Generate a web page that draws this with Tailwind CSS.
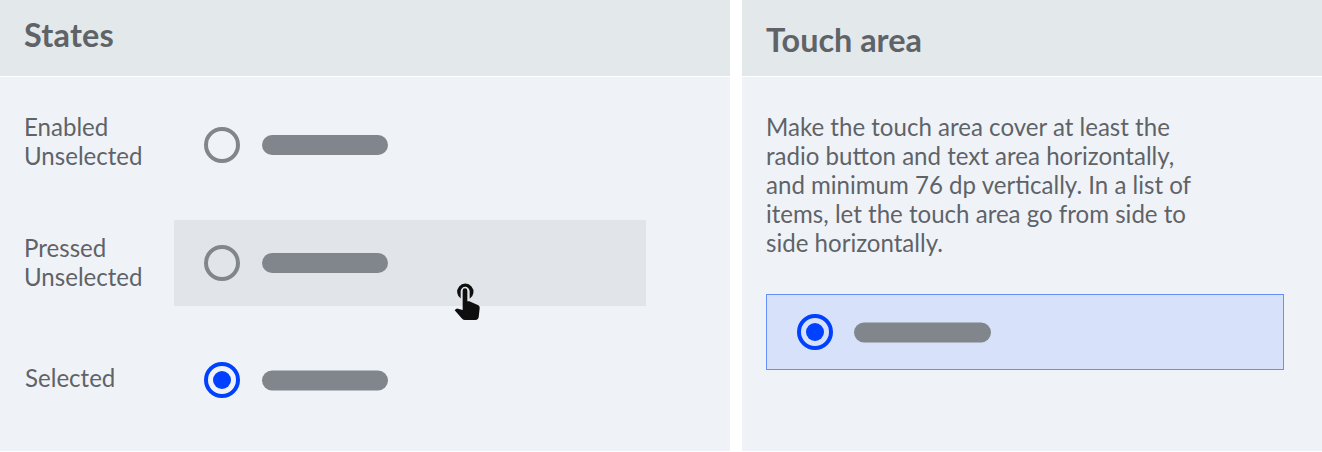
<!DOCTYPE html>
<html lang="en"><head><meta charset="utf-8"><title>Radio button states</title>
<script src="https://cdn.jsdelivr.net/npm/@tailwindcss/browser@4"></script></head>
<body class="h-[452px] w-[1322px] overflow-hidden bg-white font-['Lato',sans-serif] text-[24px] leading-[29px] text-[#5f6368]">
<main class="flex h-[451px] gap-3">
<section class="flex w-[730px] flex-col bg-[#eff3f8]">
<h1 class="h-[77px] border-b border-white bg-[#e3e8eb] pl-6 pt-[15px] text-[32.4px] font-bold leading-[40px] tracking-[0.2px]">States</h1>
<div class="flex h-[143px] items-start pl-6 pt-[35px]">
<p class="w-[180px] *:block *:origin-[0_24px] *:scale-x-[1.003] *:scale-y-[1.05]"><span>Enabled</span><span>Unselected</span></p>
<div class="mt-[15px] flex items-center gap-[22px]"><span class="size-9 rounded-full border-4 border-[#80868b]"></span><span class="h-5 w-[126px] rounded-full bg-[#80868b]"></span></div>
</div>
<div class="flex h-[86px] pl-6">
<p class="w-[150px] pt-[13px] *:block *:origin-[0_24px] *:scale-x-[1.003] *:scale-y-[1.05]"><span>Pressed</span><span>Unselected</span></p>
<div class="relative flex w-[472px] items-center gap-[22px] bg-[#e1e4e8] pl-[30px]"><span class="size-9 rounded-full border-4 border-[#80868b]"></span><span class="h-5 w-[126px] rounded-full bg-[#80868b]"></span>
<svg class="absolute left-[256px] top-[50px] h-[60px] w-[80px]" viewBox="0 0 240 180" fill="#0e0e0e"><path d="M93 86A24.500 24.500 0 1 1 119 86V64A13.500 13.500 0 0 0 92 64V85Z"/><path d="M98 62A7 7 0 0 1 112 62V94H117Q120 94 123 96L145 106Q150 109 149 115L146 142Q145 150 138 150H105Q100 150 97 147L74 121L78 117Q80 115 84 116L98 120Z"/></svg></div>
</div>
<div class="flex pl-[25px] pt-[56px]">
<p class="w-[179px] pt-px *:block *:origin-[0_24px] *:scale-x-[1.003] *:scale-y-[1.05]"><span>Selected</span></p>
<div class="flex items-center gap-[22px]"><span class="flex size-9 items-center justify-center rounded-full border-4 border-[#0040ff]"><i class="size-[18px] rounded-full bg-[#0040ff]"></i></span><span class="h-5 w-[126px] translate-y-[0.5px] rounded-full bg-[#80868b]"></span></div>
</div>
</section>
<section class="w-[580px] bg-[#eff3f8]">
<h1 class="h-[77px] border-b border-white bg-[#e3e8eb] pl-6 pt-5 text-[32.4px] font-bold leading-[40px]">Touch area</h1>
<p class="ml-6 mt-[35px] w-[500px] *:block *:origin-[0_24px] *:scale-x-[1.003] *:scale-y-[1.05]"><span>Make the touch area cover at least the</span><span>radio button and text area horizontally,</span><span>and minimum 76 dp vertically. In a list of</span><span>items, let the touch area go from side to</span><span>side horizontally.</span></p>
<div class="ml-6 mt-[37px] flex h-[76px] w-[518px] items-center gap-[21px] border border-[#6591ff] bg-[#d7e1fa] pl-[30px]"><span class="flex size-9 items-center justify-center rounded-full border-4 border-[#0040ff]"><i class="size-[18px] rounded-full bg-[#0040ff]"></i></span><span class="h-5 w-[137px] translate-y-[0.5px] rounded-full bg-[#80868b]"></span></div>
</section>
</main></body></html>
